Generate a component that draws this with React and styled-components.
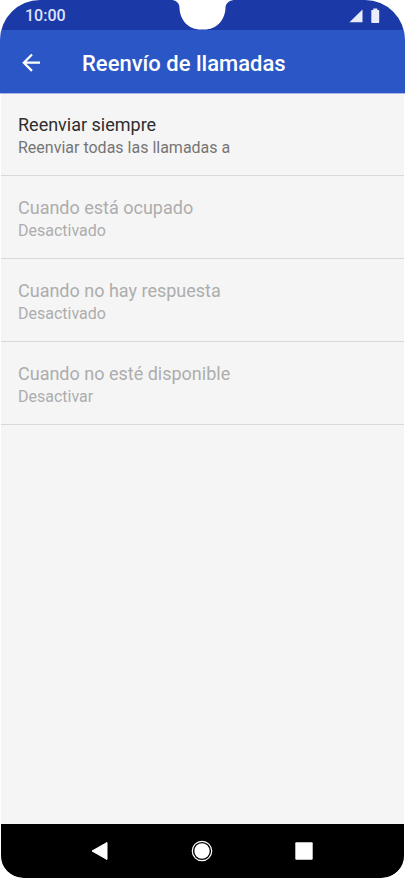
import React from 'react';
import styled, { createGlobalStyle, ThemeProvider } from 'styled-components';

const theme = {
  palette: {
    statusBar: '#1c39a8',
    primary: '#2b57c6',
    background: '#f5f5f5',
    divider: '#d9d9d9',
    text: '#2e2e2e',
    textSecondary: '#757575',
    disabled: '#adadad',
  },
};

const GlobalStyle = createGlobalStyle`
  *,
  *::before,
  *::after {
    box-sizing: border-box;
  }

  body {
    margin: 0;
    background-color: #fff;
    font-family: Roboto, 'Liberation Sans', sans-serif;
  }
`;

const Screen = styled.div`
  display: flex;
  flex-direction: column;
  min-height: 100vh;
  border-radius: 40px 40px 24px 24px;
  overflow: hidden;
`;

const StatusBar = styled.div`
  position: relative;
  display: flex;
  align-items: center;
  justify-content: space-between;
  height: 30px;
  padding: 2px 25px 0;
  background-color: ${({ theme }) => theme.palette.statusBar};
`;

const Clock = styled.time`
  font-size: 16px;
  line-height: 20px;
  font-weight: 500;
  color: #dce3fa;
`;

const StatusIcons = styled.div`
  display: flex;
  align-items: center;
  gap: 8px;
`;

const Notch = styled.svg`
  position: absolute;
  top: 0;
  left: 50%;
  transform: translateX(-50%);
  display: block;
`;

const AppBar = styled.header`
  position: relative;
  z-index: 1;
  display: flex;
  align-items: center;
  gap: 32px;
  height: 63px;
  padding: 2px 14px 0;
  background-color: ${({ theme }) => theme.palette.primary};
  box-shadow: 0 1px 0 #a9b8e6;
`;

const IconButton = styled.button`
  display: flex;
  align-items: center;
  justify-content: center;
  width: 36px;
  height: 36px;
  padding: 0;
  border: 0;
  background: none;
  cursor: pointer;
`;

const Title = styled.h1`
  margin: 0;
  padding-top: 2px;
  font-size: 22px;
  line-height: 28px;
  font-weight: 500;
  color: #fff;
`;

const Content = styled.main`
  flex: 1;
  margin: 0 1px;
  background-color: ${({ theme }) => theme.palette.background};
`;

const List = styled.ul`
  margin: 0;
  padding: 0;
  list-style: none;
`;

const Option = styled.button`
  display: block;
  width: 100%;
  height: 83px;
  padding: 4px 17px 0;
  border: 0;
  border-bottom: 1px solid ${({ theme }) => theme.palette.divider};
  background: none;
  font-family: inherit;
  text-align: left;
  color: ${({ theme }) => theme.palette.text};
  cursor: pointer;

  &:disabled {
    color: ${({ theme }) => theme.palette.disabled};
    cursor: default;
  }
`;

const OptionTitle = styled.span`
  display: block;
  font-size: 18px;
  line-height: 24px;
`;

const OptionSummary = styled.span`
  display: block;
  font-size: 16px;
  line-height: 22px;
  color: ${({ theme }) => theme.palette.textSecondary};

  ${Option}:disabled & {
    color: inherit;
  }
`;

const NavBar = styled.nav`
  display: flex;
  align-items: center;
  justify-content: center;
  gap: 66px;
  height: 54px;
  margin: 0 1px;
  padding-right: 1px;
  background-color: #000;
  border-radius: 0 0 22px 22px;
`;

const options = [
  { title: 'Reenviar siempre', summary: 'Reenviar todas las llamadas a' },
  { title: 'Cuando está ocupado', summary: 'Desactivado', disabled: true },
  { title: 'Cuando no hay respuesta', summary: 'Desactivado', disabled: true },
  { title: 'Cuando no esté disponible', summary: 'Desactivar', disabled: true },
];

const App = () => (
  <ThemeProvider theme={theme}>
    <GlobalStyle />
    <Screen>
      <StatusBar>
        <Clock>10:00</Clock>
        <Notch width="61" height="30" viewBox="0 0 61 30" aria-hidden="true">
          <path
            d="M0 0C5 1 7 4 7 8C7.500 21 17 29.500 28 29.500H32C43 29.500 52.500 21 53 8C53 4 55.500 1 61 0Z"
            fill="#fff"
          />
        </Notch>
        <StatusIcons>
          <svg width="14" height="14" viewBox="0 0 14 14" aria-hidden="true">
            <path d="M13.500 0.500V13.300H0.500Z" fill="#e9edfb" />
          </svg>
          <svg width="9" height="16" viewBox="0 0 9 16" aria-hidden="true">
            <path
              d="M2.300 0.500H6.300V2H7.500Q8.200 2 8.200 2.700V14.300Q8.200 15 7.500 15H1Q0.300 15 0.300 14.300V2.700Q0.300 2 1 2H2.300Z"
              fill="#e9edfb"
            />
          </svg>
        </StatusIcons>
      </StatusBar>
      <AppBar>
        <IconButton type="button" aria-label="Volver">
          <svg width="20" height="20" viewBox="0 0 20 20" aria-hidden="true">
            <path
              d="M18 9.700H1.800M10 1.500L1.800 9.700L10 17.900"
              fill="none"
              stroke="#fff"
              strokeWidth="2.200"
            />
          </svg>
        </IconButton>
        <Title>Reenvío de llamadas</Title>
      </AppBar>
      <Content>
        <List>
          {options.map(({ title, summary, disabled }) => (
            <li key={title}>
              <Option type="button" disabled={disabled}>
                <OptionTitle>{title}</OptionTitle>
                <OptionSummary>{summary}</OptionSummary>
              </Option>
            </li>
          ))}
        </List>
      </Content>
      <NavBar>
        <IconButton type="button" aria-label="Atrás">
          <svg width="18" height="20" viewBox="0 0 18 20" aria-hidden="true">
            <path
              d="M16 1.500V18.500L1 10Z"
              fill="#fff"
              stroke="#fff"
              strokeWidth="1"
              strokeLinejoin="round"
            />
          </svg>
        </IconButton>
        <IconButton type="button" aria-label="Inicio">
          <svg width="22" height="22" viewBox="0 0 22 22" aria-hidden="true">
            <circle cx="11" cy="11" r="9.700" fill="none" stroke="#fff" strokeWidth="1.200" />
            <circle cx="11" cy="11" r="7.700" fill="#fff" />
          </svg>
        </IconButton>
        <IconButton type="button" aria-label="Recientes">
          <svg width="18" height="18" viewBox="0 0 18 18" aria-hidden="true">
            <rect x="0.300" y="0.300" width="17.400" height="17.400" rx="1" fill="#fff" />
          </svg>
        </IconButton>
      </NavBar>
    </Screen>
  </ThemeProvider>
);

export default App;
